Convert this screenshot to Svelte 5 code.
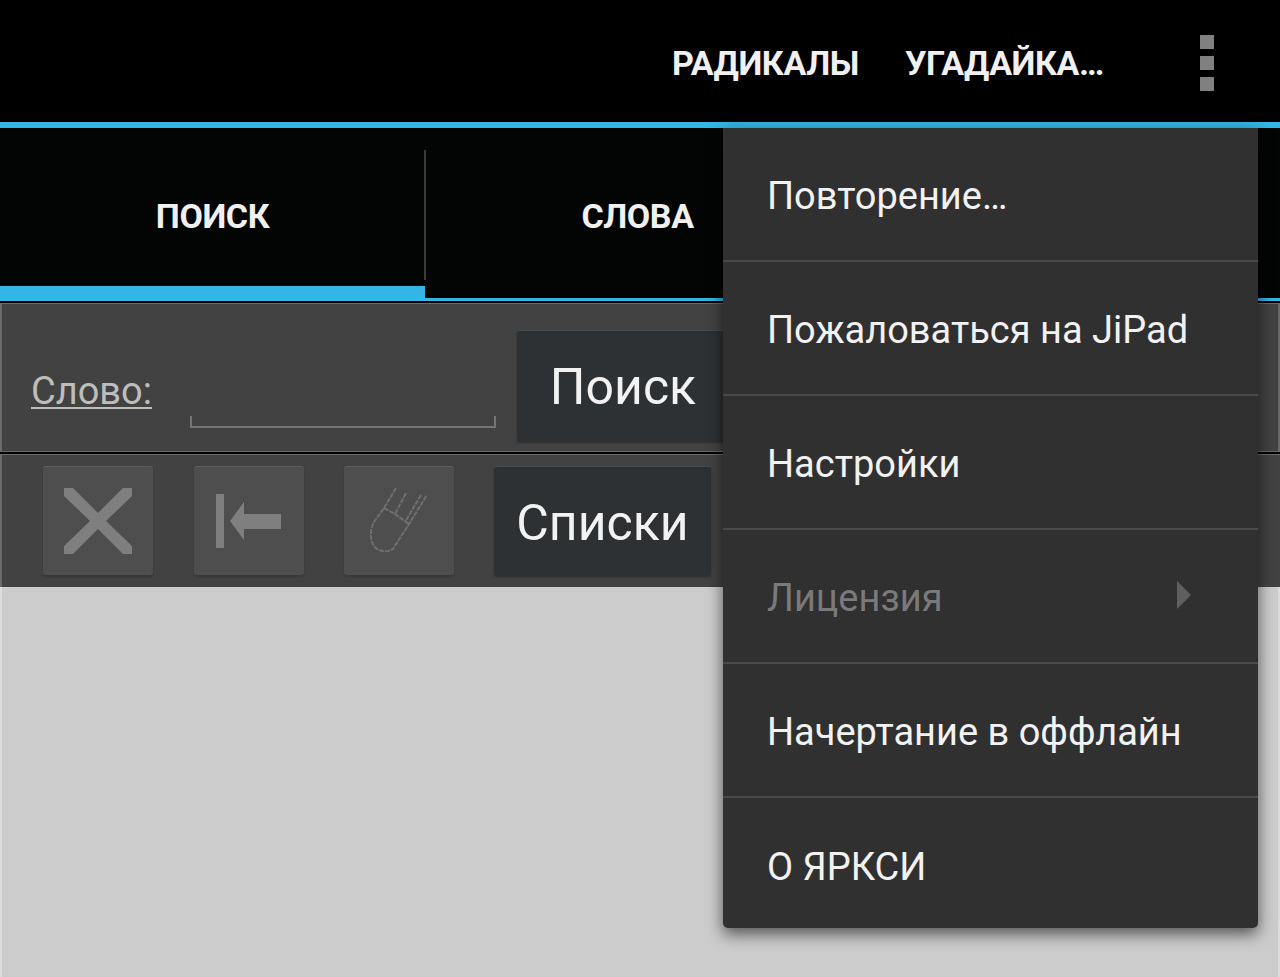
<script lang="ts">
	const tabs = ["Поиск", "Слова", "Кандзи"];
	const menu = [
		{ label: "Повторение…" },
		{ label: "Пожаловаться на JiPad" },
		{ label: "Настройки" },
		{ label: "Лицензия", disabled: true },
		{ label: "Начертание в оффлайн" },
		{ label: "О ЯРКСИ" }
	];
</script>

<div class="screen">
	<header class="actionbar">
		<span class="action">РАДИКАЛЫ</span>
		<span class="action second">УГАДАЙКА…</span>
		<div class="overflow">
			<i></i><i></i><i></i>
		</div>
	</header>

	<nav class="tabs">
		{#each tabs as tab, i}
			<div class="tab" class:active={i === 0}>
				<span>{tab}</span>
			</div>
		{/each}
	</nav>

	<section class="panel search">
		<span class="word-label">Слово:</span>
		<div class="input"></div>
		<button class="btn search-btn">Поиск</button>
	</section>

	<section class="panel tools">
		<button class="icon-btn" aria-label="Очистить">
			<svg width="68" height="66" viewBox="0 0 68 66"><path d="M0 0 H9 L34 25 L59 0 H68 V8 L42 33 L68 58 V66 H59 L34 41 L9 66 H0 V58 L26 33 L0 8 Z" fill="#7f7f7f" /></svg>
		</button>
		<button class="icon-btn" aria-label="Назад">
			<svg width="68" height="56" viewBox="0 0 68 56"><path d="M1 1h8v54H1z M15 28 L29 9 V21 H66 V36 H29 V47 Z" fill="#7f7f7f" /></svg>
		</button>
		<button class="icon-btn" aria-label="Рукописный ввод">
			<svg width="64" height="70" viewBox="0 0 64 70" fill="none" stroke="#6f6f6f" stroke-width="2" stroke-dasharray="5 1"><path d="M29 2 L17 22 L7 36 C2 46 3 58 10 63 C15 66 22 66 26 63 L42 38 L60 9 M17 22 L28 28 L42 38 M39 7 L28 28 M54 9 L38 36" /></svg>
		</button>
		<button class="btn lists-btn">Списки</button>
	</section>

	<main class="content"></main>

	<div class="menu">
		{#each menu as item}
			<div class="menu-item" class:disabled={item.disabled}>
				<span>{item.label}</span>
				{#if item.disabled}
					<b class="arrow"></b>
				{/if}
			</div>
		{/each}
	</div>
</div>

<style>
	:global(body) {
		background: #cccccc;
	}

	.screen {
		position: relative;
		display: flex;
		flex-direction: column;
		width: 1280px;
		height: 977px;
		overflow: hidden;
		font-family: Roboto, "Noto Sans", sans-serif;
		background: #000;
	}

	.actionbar {
		display: flex;
		align-items: center;
		flex: none;
		height: 122px;
		box-sizing: border-box;
		background: #000;
	}

	.action {
		margin-top: 4px;
		margin-left: 672px;
		color: #f0f0f0;
		font-size: 34px;
		font-weight: 700;
		letter-spacing: -0.4px;
		white-space: nowrap;
	}

	.action.second {
		margin-left: 46px;
	}

	.overflow {
		display: flex;
		flex-direction: column;
		gap: 7px;
		margin-left: 96px;
		margin-top: 4px;
	}

	.overflow i {
		display: block;
		width: 14px;
		height: 14px;
		background: #808080;
	}

	.tabs {
		display: flex;
		flex: none;
		height: 170px;
		background: #030404;
		border-top: 6px solid #33b5e5;
		border-bottom: 3px solid #33b5e5;
	}

	.tab {
		position: relative;
		display: flex;
		align-items: center;
		justify-content: center;
		width: 425px;
		color: #f0f0f0;
		font-size: 34px;
		font-weight: 700;
		letter-spacing: -0.4px;
		text-transform: uppercase;
	}

	.tab span {
		margin-top: 5px;
	}

	.tab.active::before {
		content: "";
		position: absolute;
		left: 0;
		right: 0;
		bottom: -3px;
		height: 15px;
		background: #33b5e5;
	}

	.tab.active::after {
		content: "";
		position: absolute;
		right: -1px;
		top: 22px;
		bottom: 18px;
		width: 2px;
		background: #3a3a3a;
	}

	.panel {
		display: flex;
		flex: none;
		box-sizing: border-box;
		background: #424242;
		border: 1px solid #6a6a6a;
		border-width: 1px 2px;
	}

	.search {
		align-items: flex-start;
		height: 149px;
		margin-top: 2px;
		padding-left: 29px;
	}

	.tools {
		align-items: flex-start;
		height: 133px;
		margin-top: 2px;
		padding: 11px 0 0 41px;
		border-bottom: 0;
		border-right: 0;
	}

	.word-label {
		margin-top: 65px;
		color: #bdbdbd;
		font-size: 38px;
		line-height: 44px;
		text-decoration: underline;
		text-underline-offset: 3px;
		text-decoration-thickness: 2px;
	}

	.input {
		width: 306px;
		height: 12px;
		margin: 112px 0 0 38px;
		box-sizing: border-box;
		border: 2px solid #757575;
		border-top: 0;
	}

	.btn {
		flex: none;
		padding: 0;
		color: #f2f2f2;
		font-family: inherit;
		font-size: 50px;
		background: #2d3133;
		border: 0;
		border-top: 1px solid #444a4d;
		border-radius: 3px;
		box-shadow: 0 2px 2px #303030;
	}

	.search-btn {
		width: 300px;
		height: 111px;
		margin: 26px 0 0 21px;
		padding-top: 2px;
		padding-right: 88px;
	}

	.lists-btn {
		width: 217px;
		height: 109px;
		margin-left: 40px;
		padding-top: 3px;
	}

	.icon-btn {
		display: flex;
		align-items: center;
		justify-content: center;
		flex: none;
		width: 110px;
		height: 109px;
		margin-right: 40.5px;
		padding: 0;
		background: #4e4e4e;
		border: 0;
		border-top: 1px solid #5c5c5c;
		border-radius: 3px;
		box-shadow: 0 2px 2px #383838;
	}

	.icon-btn:nth-child(3) {
		margin-right: 0;
	}

	.content {
		flex: 1;
		background: #cccccc;
		border-left: 2px solid #dcdcdc;
		border-right: 2px solid #dcdcdc;
	}

	.menu {
		position: absolute;
		top: 128px;
		left: 723px;
		width: 535px;
		height: 800px;
		background: #303030;
		border-radius: 0 0 5px 5px;
		box-shadow: 0 6px 16px rgba(0, 0, 0, 0.6);
	}

	.menu-item {
		display: flex;
		align-items: center;
		justify-content: space-between;
		box-sizing: border-box;
		height: 134px;
		padding: 0 67px 0 44px;
		color: #f2f2f2;
		font-size: 38px;
		border-bottom: 2px solid #4a4a4a;
	}

	.menu-item span {
		margin-top: 3px;
	}

	.menu-item:first-child {
		height: 134px;
	}

	.menu-item:last-child {
		border-bottom: 0;
	}

	.menu-item.disabled {
		color: #7a7a7a;
	}

	.arrow {
		width: 0;
		height: 0;
		margin-top: -2px;
		border-left: 14px solid #5f5f5f;
		border-top: 14px solid transparent;
		border-bottom: 14px solid transparent;
	}
</style>
